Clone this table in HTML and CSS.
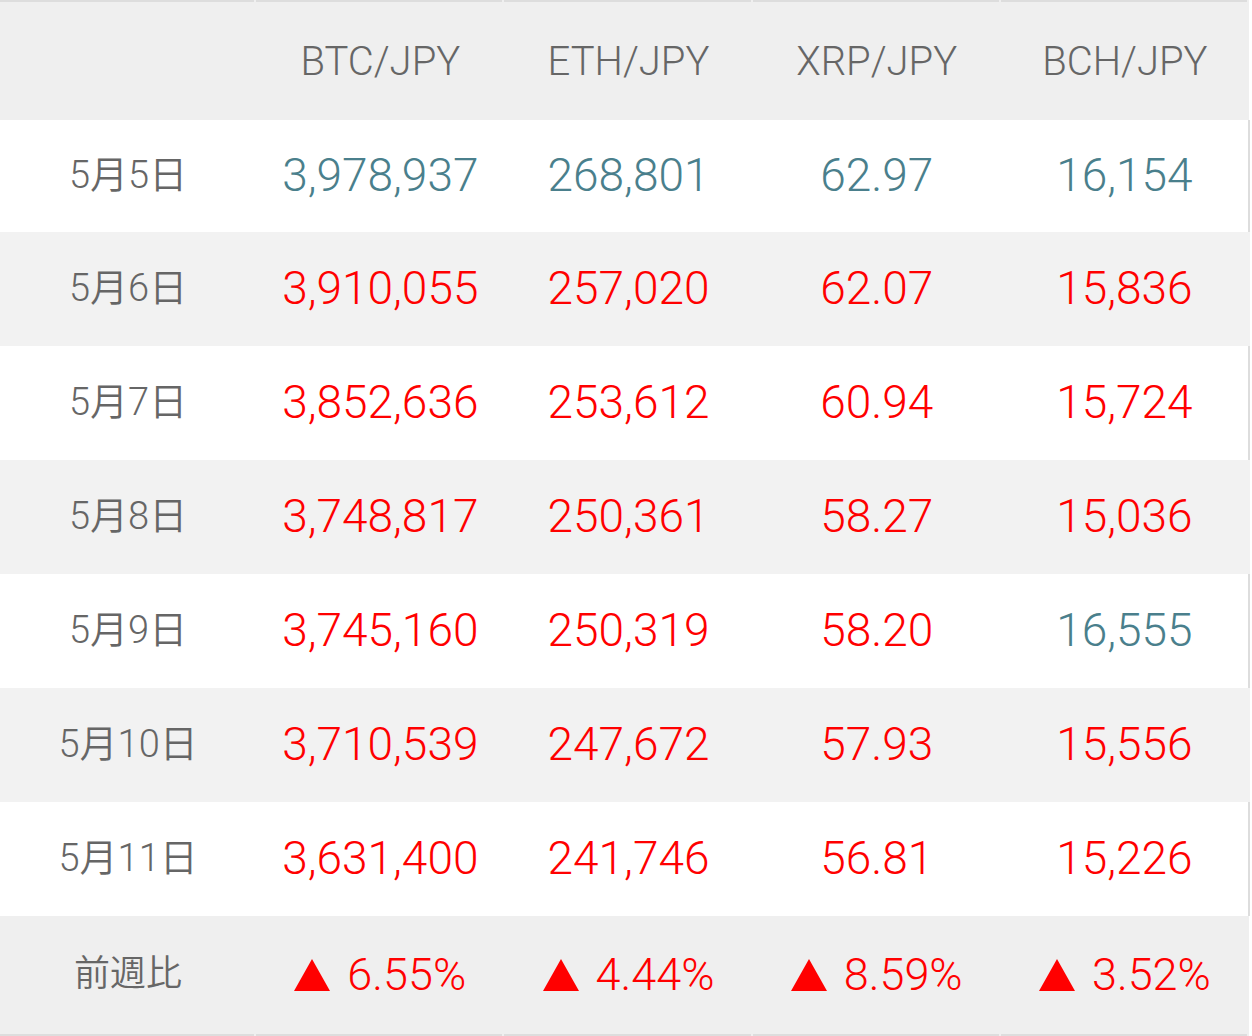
FILE: index.html
```html
<!DOCTYPE html>
<html lang="ja">
<head>
<meta charset="utf-8">
<title>価格表</title>
<link rel="stylesheet" href="styles.css">
</head>
<body>
<table class="rates">
  <thead>
    <tr class="head-row">
      <th class="c-date"></th>
      <th>BTC/JPY</th>
      <th>ETH/JPY</th>
      <th>XRP/JPY</th>
      <th>BCH/JPY</th>
    </tr>
  </thead>
  <tbody>
    <tr class="row row-first">
      <td class="c-date">5月5日</td>
      <td class="up">3,978,937</td>
      <td class="up">268,801</td>
      <td class="up">62.97</td>
      <td class="up">16,154</td>
    </tr>
    <tr class="row alt">
      <td class="c-date">5月6日</td>
      <td class="down">3,910,055</td>
      <td class="down">257,020</td>
      <td class="down">62.07</td>
      <td class="down">15,836</td>
    </tr>
    <tr class="row">
      <td class="c-date">5月7日</td>
      <td class="down">3,852,636</td>
      <td class="down">253,612</td>
      <td class="down">60.94</td>
      <td class="down">15,724</td>
    </tr>
    <tr class="row alt">
      <td class="c-date">5月8日</td>
      <td class="down">3,748,817</td>
      <td class="down">250,361</td>
      <td class="down">58.27</td>
      <td class="down">15,036</td>
    </tr>
    <tr class="row">
      <td class="c-date">5月9日</td>
      <td class="down">3,745,160</td>
      <td class="down">250,319</td>
      <td class="down">58.20</td>
      <td class="up">16,555</td>
    </tr>
    <tr class="row alt">
      <td class="c-date">5月10日</td>
      <td class="down">3,710,539</td>
      <td class="down">247,672</td>
      <td class="down">57.93</td>
      <td class="down">15,556</td>
    </tr>
    <tr class="row">
      <td class="c-date">5月11日</td>
      <td class="down">3,631,400</td>
      <td class="down">241,746</td>
      <td class="down">56.81</td>
      <td class="down">15,226</td>
    </tr>
  </tbody>
  <tfoot>
    <tr class="foot-row">
      <td class="c-date">前週比</td>
      <td class="down"><span class="tri"></span>6.55%</td>
      <td class="down"><span class="tri"></span>4.44%</td>
      <td class="down"><span class="tri"></span>8.59%</td>
      <td class="down"><span class="tri"></span>3.52%</td>
    </tr>
  </tfoot>
</table>
</body>
</html>
```

FILE: styles.css
```css
html, body {
  margin: 0;
  padding: 0;
  background: #ffffff;
}

.rates {
  width: 1250px;
  border-collapse: collapse;
  table-layout: fixed;
  font-family: Roboto, "Noto Sans CJK JP", sans-serif;
  font-weight: 350;
  color: #666666;
}

.rates th,
.rates td {
  width: 248px;
  padding: 0;
  text-align: center;
  vertical-align: middle;
  white-space: nowrap;
  line-height: 1.2;
}

.rates .c-date {
  width: 256px;
}

.head-row th {
  height: 116px;
  font-weight: 350;
  font-size: 40px;
  color: #666666;
  background: linear-gradient(#dddddd, #dddddd) left top / calc(100% - 2px) 2px no-repeat, #efefef;
  padding-top: 4px;
  padding-bottom: 0;
}

.row td {
  height: 114px;
  font-size: 46px;
  background: #ffffff;
}

.row-first td {
  height: 112px;
}

.row.alt td {
  background: #f2f2f2;
}

.row td:last-child {
  border-right: 2px solid #dddddd;
}

.row.alt td:last-child {
  border-right-color: #f2f2f2;
}

.row .c-date {
  font-size: 38px;
  color: #666666;
}

.up {
  color: #4a7f8c;
}

.down {
  color: #ff0000;
}

.foot-row td {
  height: 118px;
  font-size: 45px;
  background: linear-gradient(#dddddd, #dddddd) left bottom / calc(100% - 2px) 2px no-repeat, #efefef;
  padding-bottom: 2px;
}

.foot-row .c-date {
  font-size: 36px;
  color: #666666;
}

.tri {
  display: inline-block;
  width: 0;
  height: 0;
  border-left: 18px solid transparent;
  border-right: 18px solid transparent;
  border-bottom: 32px solid #ff0000;
  margin-right: 17px;
  vertical-align: -1px;
}
```
